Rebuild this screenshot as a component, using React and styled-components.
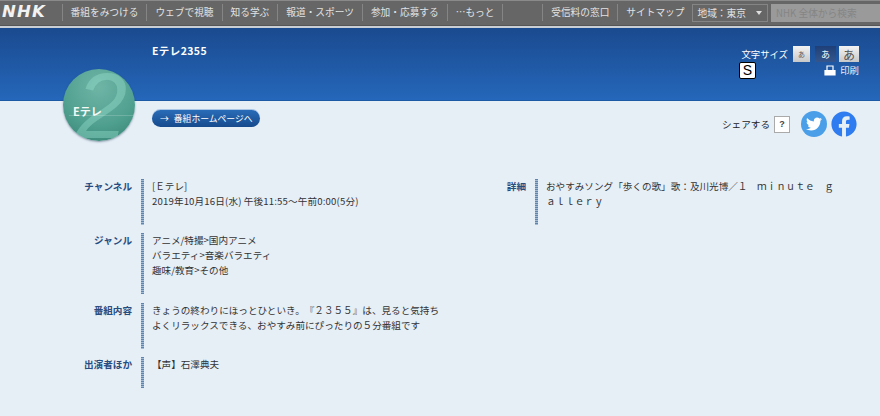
import React from 'react'
import styled, { createGlobalStyle } from 'styled-components'
import { FaTwitter, FaFacebook } from 'react-icons/fa'

const ink = '#333'
const navy = '#264c80'
const cjk = '"Noto Sans CJK JP", "Noto Sans", sans-serif'

const GlobalStyle = createGlobalStyle`
  html, body {
    margin: 0;
    background: #e6eef6;
    font-family: ${cjk};
    font-size: 9.6px;
    color: ${ink};
    text-spacing-trim: space-all;
  }
  * { box-sizing: border-box; }
`

const Page = styled.div`
  position: relative;
  width: 880px;
  height: 416px;
  overflow: hidden;
`

const NavBar = styled.nav`
  display: flex;
  align-items: center;
  height: 28px;
  padding: 1px 0 3px;
  background: #666;
  border-top: 1px solid #8a8a8a;
  border-bottom: 2px solid #c9ced4;
  box-shadow: inset 0 -1px 0 #555;
`

const NhkLogo = styled.div`
  width: 62px;
  padding-left: 2px;
  font: italic 700 16.5px/1 "DejaVu Sans", sans-serif;
  letter-spacing: 1.2px;
  color: #f2f2f2;
`

const NavItem = styled.a`
  display: block;
  padding: 0 8px;
  border-left: 1px solid #858585;
  line-height: 17px;
  font-size: 9.7px;
  white-space: nowrap;
  color: #e2e2e2;
`

const NavGap = styled.div`
  width: 40px;
  height: 17px;
  border-left: 1px solid #858585;
`

const RegionSelect = styled.div`
  display: flex;
  align-items: center;
  justify-content: space-between;
  width: 76px;
  height: 18px;
  margin-right: 3px;
  padding: 0 5px 0 4px;
  border: 1px solid #858585;
  font-size: 9.7px;
  color: #e2e2e2;
`

const Caret = styled.span`
  width: 0;
  height: 0;
  border: 3px solid transparent;
  border-top: 4px solid #ddd;
  border-bottom: none;
`

const SearchBox = styled.input`
  width: 109px;
  height: 18px;
  padding: 0 5px;
  border: none;
  outline: none;
  background: #9a9a9a;
  font-family: ${cjk};
  font-size: 9.7px;
  &::placeholder { color: #858585; opacity: 1; }
`

const Band = styled.header`
  display: flex;
  justify-content: space-between;
  height: 73px;
  padding: 16px 21px 0 152px;
  background: linear-gradient(#1a4a8f, #2567ba);
  border-bottom: 1px solid #1d5aa5;
`

const ProgramTitle = styled.h1`
  margin: 0;
  font-size: 10.5px;
  line-height: 13px;
  letter-spacing: .4px;
  font-weight: 700;
  color: #fff;
`

const Tools = styled.div`
  display: flex;
  flex-direction: column;
  width: 120px;
  margin-top: 2px;
`

const SizeRow = styled.div`
  display: flex;
  align-items: center;
  justify-content: flex-end;
`

const SizeLabel = styled.span`
  margin-right: 5px;
  color: #fff;
  font-size: 9.4px;
`

const SizeButton = styled.span`
  display: flex;
  align-items: center;
  justify-content: center;
  width: ${p => p.$w}px;
  height: 16px;
  margin-left: ${p => p.$gap}px;
  font-size: ${p => p.$size}px;
  color: ${p => (p.$active ? '#fff' : '#555')};
  background: ${p => (p.$active ? 'linear-gradient(#1f3f78, #35568c)' : 'linear-gradient(#f3f3f3, #c8c8c8)')};
`

const PrintRow = styled.div`
  display: flex;
  align-items: center;
  justify-content: space-between;
  height: 16px;
`

const SkypeBox = styled.span`
  display: flex;
  align-items: center;
  justify-content: center;
  width: 17px;
  height: 17px;
  border: 1px solid #000;
  border-radius: 2px;
  background: #fff;
  font: 14px/1 "Liberation Sans", sans-serif;
  color: #000;
`

const PrintLink = styled.span`
  display: flex;
  align-items: center;
  gap: 4px;
  color: #e8eef8;
  font-size: 9.4px;
`

const Logo = styled.div`
  position: absolute;
  left: 63px;
  top: 69px;
  width: 72px;
  height: 72px;
  overflow: hidden;
  border-radius: 50%;
  background: radial-gradient(circle at 50% 25%, #6fb5a6, #4f9f8f 60%, #33806f 100%);
  box-shadow: 0 1px 2px rgba(40, 70, 90, .5);
`

const LogoTwo = styled.span`
  position: absolute;
  left: 13px;
  top: 1px;
  font: italic 400 92px/72px "Liberation Sans", sans-serif;
  color: rgba(150, 222, 205, .42);
`

const LogoName = styled.span`
  position: absolute;
  left: 10px;
  top: 34px;
  font-size: 11px;
  line-height: 16px;
  font-weight: 700;
  color: #f4f8f6;
`

const LogoRule = styled.span`
  position: absolute;
  left: 6px;
  right: 0;
  top: 46px;
  height: 1px;
  background: rgba(255, 255, 255, .18);
`

const ActionRow = styled.div`
  display: flex;
  justify-content: space-between;
  height: 78px;
  padding: 9px 23px 0 152px;
`

const HomeLink = styled.a`
  display: flex;
  align-items: center;
  gap: 5px;
  width: 108px;
  height: 17px;
  padding-left: 8px;
  border-radius: 9px;
  background: linear-gradient(#2a6cb8, #164a8d);
  box-shadow: 0 -1px 0 #a9c6e6;
  font-size: 8.8px;
  color: #fff;
`

const ShareGroup = styled.div`
  display: flex;
  align-items: center;
  height: 26px;
  margin-top: 1px;
`

const ShareLabel = styled.span`
  margin-right: 4px;
  font-size: 9.6px;
  color: #222;
`

const HelpBox = styled.span`
  display: flex;
  align-items: center;
  justify-content: center;
  width: 16px;
  height: 17px;
  margin-right: 11px;
  border: 1px solid #aaa;
  background: #fff;
  font: 700 9px/1 "Liberation Sans", sans-serif;
  color: #444;
`

const Social = styled.a`
  display: flex;
  margin-right: ${p => p.$gap || 0}px;
  color: ${p => p.$color};
`

const TwitterBadge = styled(Social)`
  align-items: center;
  justify-content: center;
  width: 26px;
  height: 26px;
  border-radius: 50%;
  background: #4a9fe8;
  color: #fff;
`

const Details = styled.main`
  display: grid;
  grid-template-columns: 443px 1fr;
`

const Column = styled.dl`
  display: grid;
  grid-template-columns: ${p => p.$label}px ${p => p.$text}px;
  row-gap: 8.3px;
  align-content: start;
  margin: 0;
`

const Term = styled.dt`
  padding-right: 9px;
  text-align: right;
  line-height: 15px;
  font-size: 9.6px;
  font-weight: 700;
  color: ${navy};
`

const Value = styled.dd`
  margin: 0;
  padding: 0 0 16px 11px;
  line-height: 15px;
  color: ${ink};
  background: repeating-linear-gradient(#5f84ad 0 1px, #a3bbd3 1px 2px) 0 0 / 3px 100% no-repeat;
`

const Line = styled.div`
  letter-spacing: ${p => p.$spacing || 0}px;
`

const PrinterIcon = () => (
  <svg width="12" height="11" viewBox="0 0 12 11" fill="none" stroke="#fff" strokeWidth="1.2">
    <path d="M3 5V1h6v4" />
    <path d="M1 5.5h10V10H1z" fill="#fff" />
  </svg>
)

const navLinks = ['番組をみつける', 'ウェブで視聴', '知る学ぶ', '報道・スポーツ', '参加・応募する', '…もっと']

const leftRows = [
  { term: 'チャンネル', lines: [{ text: '[Ｅテレ]' }, { text: '2019年10月16日(水) 午後11:55～午前0:00(5分)', spacing: 0.15 }] },
  {
    term: 'ジャンル',
    lines: [{ text: 'アニメ/特撮>国内アニメ' }, { text: 'バラエティ>音楽バラエティ' }, { text: '趣味/教育>その他' }],
  },
  {
    term: '番組内容',
    lines: [{ text: 'きょうの終わりにほっとひといき。『２３５５』は、見ると気持ち' }, { text: 'よくリラックスできる、おやすみ前にぴったりの５分番組です' }],
  },
  { term: '出演者ほか', lines: [{ text: '【声】石澤典夫' }] },
]

const rightRows = [
  { term: '詳細', lines: [{ text: 'おやすみソング「歩くの歌」歌：及川光博／１　ｍｉｎｕｔｅ　ｇ' }, { text: 'ａｌｌｅｒｙ' }] },
]

const Rows = ({ rows }) =>
  rows.map(row => (
    <React.Fragment key={row.term}>
      <Term>{row.term}</Term>
      <Value>
        {row.lines.map(line => (
          <Line key={line.text} $spacing={line.spacing}>{line.text}</Line>
        ))}
      </Value>
    </React.Fragment>
  ))

export default function App() {
  return (
    <Page>
      <GlobalStyle />
      <NavBar>
        <NhkLogo>NHK</NhkLogo>
        {navLinks.map(link => (
          <NavItem key={link}>{link}</NavItem>
        ))}
        <NavGap />
        <NavItem>受信料の窓口</NavItem>
        <NavItem>サイトマップ</NavItem>
        <RegionSelect>
          地域：東京
          <Caret />
        </RegionSelect>
        <SearchBox placeholder="NHK 全体から検索" />
      </NavBar>

      <Band>
        <ProgramTitle>Eテレ2355</ProgramTitle>
        <Tools>
          <SizeRow>
            <SizeLabel>文字サイズ</SizeLabel>
            <SizeButton $w={17} $gap={0} $size={7}>あ</SizeButton>
            <SizeButton $w={21} $gap={5} $size={9} $active>あ</SizeButton>
            <SizeButton $w={20} $gap={3} $size={12}>あ</SizeButton>
          </SizeRow>
          <PrintRow>
            <SkypeBox>S</SkypeBox>
            <PrintLink>
              <PrinterIcon />
              印刷
            </PrintLink>
          </PrintRow>
        </Tools>
      </Band>

      <Logo>
        <LogoTwo>2</LogoTwo>
        <LogoRule />
        <LogoName>Eテレ</LogoName>
      </Logo>

      <ActionRow>
        <HomeLink>
          <span>→</span>
          番組ホームページへ
        </HomeLink>
        <ShareGroup>
          <ShareLabel>シェアする</ShareLabel>
          <HelpBox>?</HelpBox>
          <TwitterBadge $gap={4}>
            <FaTwitter size={16} />
          </TwitterBadge>
          <Social $color="#2f7bf0">
            <FaFacebook size={26} />
          </Social>
        </ShareGroup>
      </ActionRow>

      <Details>
        <Column $label={141} $text={300}>
          <Rows rows={leftRows} />
        </Column>
        <Column $label={92} $text={300}>
          <Rows rows={rightRows} />
        </Column>
      </Details>
    </Page>
  )
}
